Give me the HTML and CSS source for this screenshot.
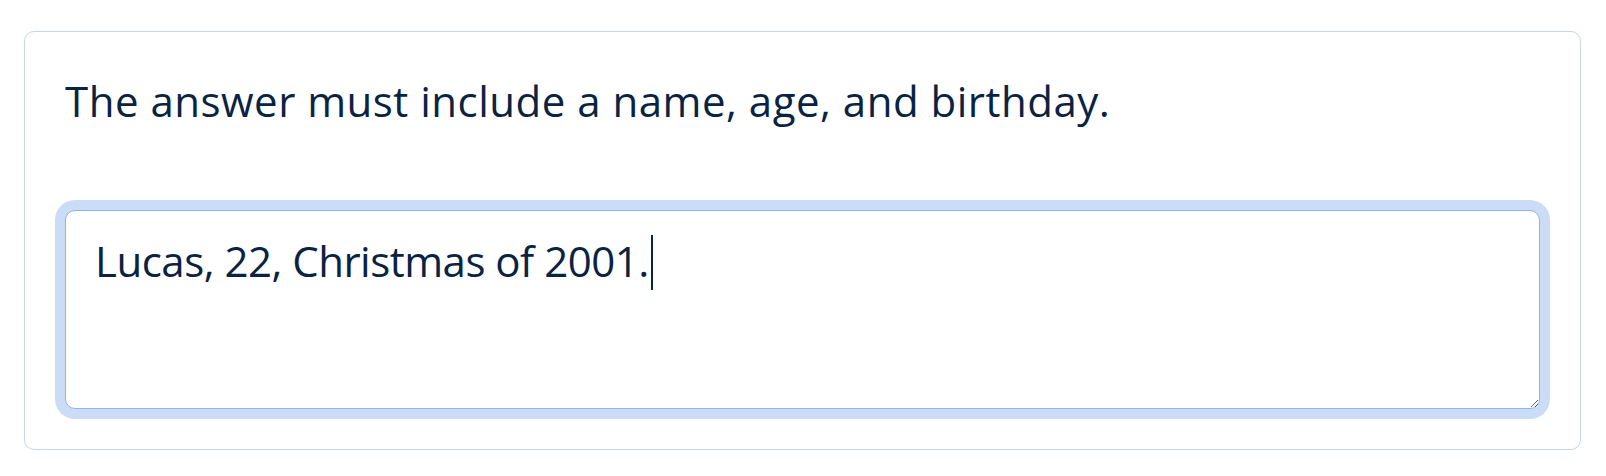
FILE: index.html
```html
<!DOCTYPE html>
<html lang="en">
<head>
<meta charset="utf-8">
<title>Answer</title>
<link rel="stylesheet" href="styles.css">
</head>
<body>
<main class="page">
  <section class="card">
    <p class="prompt">The answer must include a name, age, and birthday.</p>
    <div class="field">
      <textarea class="answer" id="answer" aria-label="Answer" spellcheck="false">Lucas, 22, Christmas of 2001.</textarea>
      <span class="measure" id="measure" aria-hidden="true"></span>
      <span class="caret" id="caret" aria-hidden="true"></span>
    </div>
  </section>
</main>
<script src="script.js"></script>
</body>
</html>
```
FILE: styles.css
```css
html, body {
  margin: 0;
  padding: 0;
  background: #ffffff;
}

.page {
  padding: 31px 25px 0 24px;
}

.card {
  border: 1px solid #c6d5e7;
  border-radius: 10px;
  padding: 40px;
  background: #ffffff;
  display: flex;
  flex-direction: column;
}

.prompt {
  margin: 0 0 80px 0;
  font-family: "Open Sans", "Noto Sans", sans-serif;
  font-size: 42px;
  line-height: 58px;
  letter-spacing: 0.5px;
  color: #0a2342;
}

.field {
  position: relative;
}

.answer,
.measure {
  font-family: "Open Sans", "Noto Sans", sans-serif;
  font-size: 42px;
  line-height: 58px;
  letter-spacing: -0.5px;
}

.answer {
  display: block;
  box-sizing: border-box;
  width: 100%;
  height: 199px;
  margin: 0;
  padding: 21px 29px;
  border: 1.5px solid #8fb3ef;
  border-radius: 10px;
  box-shadow: 0 0 0 10px #cbdcf7;
  outline: none;
  resize: vertical;
  color: #0a2342;
  caret-color: #0a2342;
  background: #ffffff;
}

.measure {
  position: absolute;
  visibility: hidden;
  white-space: pre;
  left: 0;
  top: 0;
}

.caret {
  position: absolute;
  top: 25px;
  left: 591px;
  width: 2px;
  height: 55px;
  background: #0a2342;
  pointer-events: none;
}
```
FILE: script.js
```js
var a = document.getElementById('answer');
var m = document.getElementById('measure');
var c = document.getElementById('caret');
m.textContent = a.value;
c.style.left = (1.5 + 29 + m.getBoundingClientRect().width + 2) + 'px';
```
